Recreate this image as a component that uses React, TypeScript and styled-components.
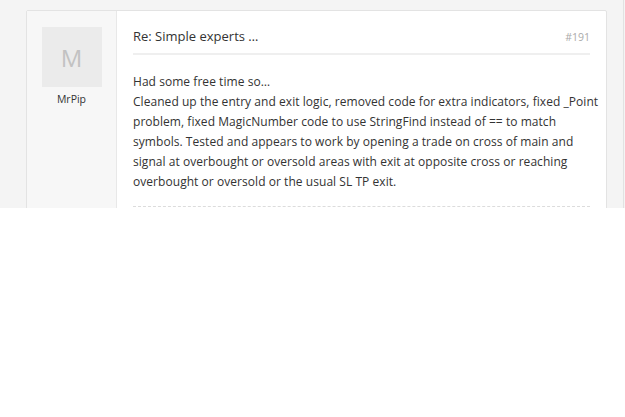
import styled, { createGlobalStyle } from "styled-components";

const Global = createGlobalStyle`
    body {
        margin: 0;
        background: #ffffff;
        font-family: "Open Sans", "Liberation Sans", Arial, sans-serif;
    }
`;

const Viewport = styled.div`
    height: 208px;
    overflow: hidden;
    background: #f4f4f4;
    position: relative;
    padding: 10px 0 0 26px;
    box-sizing: border-box;
`;

const EdgeLine = styled.div`
    position: absolute;
    top: 0;
    right: 1px;
    width: 1px;
    height: 100%;
    background: #e2e2e2;
`;

const Post = styled.div`
    width: 581px;
    display: flex;
    background: #ffffff;
    border: 1px solid #e3e3e3;
    border-radius: 2px;
    box-sizing: border-box;
    min-height: 260px;
`;

const Author = styled.div`
    width: 90px;
    box-sizing: border-box;
    flex-shrink: 0;
    background: #f7f7f7;
    border-right: 1px solid #e8e8e8;
    display: flex;
    flex-direction: column;
    align-items: center;
    padding-top: 16px;
`;

const Avatar = styled.div`
    width: 60px;
    height: 60px;
    background: #ebebeb;
    color: #c2c2c2;
    font-size: 24px;
    display: flex;
    align-items: center;
    justify-content: center;
`;

const Name = styled.div`
    margin-top: 5px;
    font-size: 10.5px;
    color: #333;
`;

const Main = styled.div`
    flex: 1;
    min-width: 0;
    padding: 16px 16px 0 16px;
`;

const Header = styled.div`
    display: flex;
    justify-content: space-between;
    align-items: baseline;
    padding-bottom: 8px;
    border-bottom: 2px solid #efefef;
`;

const Title = styled.div`
    font-size: 13px;
    color: #333;
`;

const Num = styled.div`
    font-size: 10.5px;
    color: #aaa;
`;

const Body = styled.div`
    margin-top: 17px;
    padding-bottom: 14px;
    border-bottom: 1px dashed #dcdcdc;
`;

const Text = styled.p`
    margin: 0 -12px 0 0;
    font-size: 12px;
    letter-spacing: 0.05px;
    line-height: 20px;
    color: #333;
    white-space: nowrap;
`;

export default function App() {
    return (
        <>
            <Global />
            <Viewport>
                <EdgeLine />
                <Post>
                    <Author>
                        <Avatar>M</Avatar>
                        <Name>MrPip</Name>
                    </Author>
                    <Main>
                        <Header>
                            <Title>Re: Simple experts …</Title>
                            <Num>#191</Num>
                        </Header>
                        <Body>
                            <Text>
                                Had some free time so…
                                <br />
                                Cleaned up the entry and exit logic, removed code for extra indicators, fixed _Point
                                <br />
                                problem, fixed MagicNumber code to use StringFind instead of == to match
                                <br />
                                symbols. Tested and appears to work by opening a trade on cross of main and
                                <br />
                                signal at overbought or oversold areas with exit at opposite cross or reaching
                                <br />
                                overbought or oversold or the usual SL TP exit.
                            </Text>
                        </Body>
                    </Main>
                </Post>
            </Viewport>
        </>
    );
}
